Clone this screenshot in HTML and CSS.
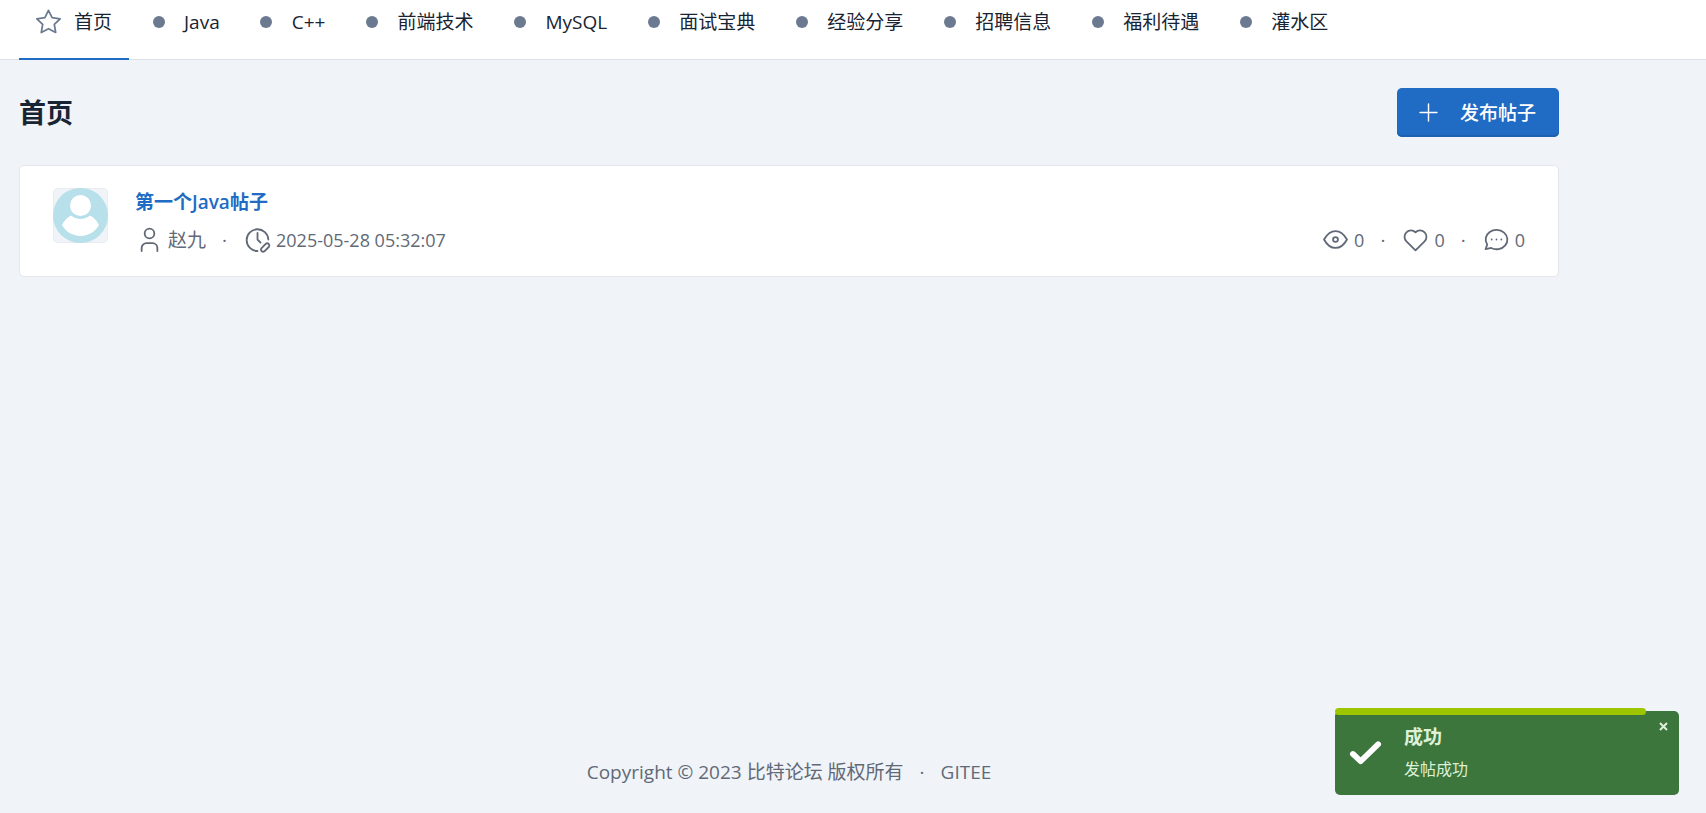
FILE: index.html
```html
<!DOCTYPE html>
<html lang="zh-CN">
<head>
<meta charset="utf-8">
<meta name="viewport" content="width=device-width, initial-scale=1">
<title>比特论坛</title>
<link rel="stylesheet" href="styles.css">
</head>
<body>
<nav class="navbar">
  <a class="nav-link active" href="#">
    <svg class="nav-icon star" viewBox="0 0 24 24"><path d="M12 17.75l-6.172 3.245l1.179-6.873l-5-4.867l6.9-1l3.086-6.253l3.086 6.253l6.9 1l-5 4.867l1.179 6.873z"/></svg>
    <span>首页</span>
  </a>
  <a class="nav-link" href="#"><span class="nav-icon"><i class="dot"></i></span><span>Java</span></a>
  <a class="nav-link" href="#"><span class="nav-icon"><i class="dot"></i></span><span>C++</span></a>
  <a class="nav-link" href="#"><span class="nav-icon"><i class="dot"></i></span><span>前端技术</span></a>
  <a class="nav-link" href="#"><span class="nav-icon"><i class="dot"></i></span><span>MySQL</span></a>
  <a class="nav-link" href="#"><span class="nav-icon"><i class="dot"></i></span><span>面试宝典</span></a>
  <a class="nav-link" href="#"><span class="nav-icon"><i class="dot"></i></span><span>经验分享</span></a>
  <a class="nav-link" href="#"><span class="nav-icon"><i class="dot"></i></span><span>招聘信息</span></a>
  <a class="nav-link" href="#"><span class="nav-icon"><i class="dot"></i></span><span>福利待遇</span></a>
  <a class="nav-link" href="#"><span class="nav-icon"><i class="dot"></i></span><span>灌水区</span></a>
</nav>
<div class="page">
  <main>
    <header class="page-header">
      <h1>首页</h1>
      <button class="btn-primary" type="button">
        <svg class="icon plus" viewBox="0 0 24 24"><path d="M12 5v14M5 12h14"/></svg>
        <span>发布帖子</span>
      </button>
    </header>
    <article class="card">
      <svg class="avatar" viewBox="0 0 55 55" role="img" aria-label="头像">
        <circle class="avatar-bg" cx="27.500" cy="27.500" r="27.500"/>
        <circle class="avatar-fg" cx="27.500" cy="17.500" r="10.500"/>
        <path class="avatar-fg" d="M18 27.500C23.500 32 31.500 32 37 27.500C41 29.500 44 33 46 37C38 51.500 17 51.500 9 37C11 33 14 29.500 18 27.500Z"/>
      </svg>
      <div class="card-body">
        <a class="post-title" href="#">第一个Java帖子</a>
        <div class="meta">
          <div class="meta-list">
            <span class="meta-item">
              <svg class="icon" viewBox="0 0 24 24"><circle cx="12" cy="7" r="4"/><path d="M5.500 21.500v-2.500a4 4 0 0 1 4-4h5a4 4 0 0 1 4 4v2.500"/></svg>
              赵九
            </span>
            <span class="sep">·</span>
            <span class="meta-item">
              <svg class="icon" viewBox="0 0 24 24"><path d="M21 12a9 9 0 1 0-9 9.500M12 6.500V12l2.500 2.500"/><path d="M19 15.500l-3.800 3.800a1.800 1.800 0 0 0 2.500 2.500L21.500 18a1.800 1.800 0 0 0-2.500-2.500z"/></svg>
              <time class="number">2025-05-28 05:32:07</time>
            </span>
          </div>
          <div class="meta-list">
            <span class="meta-item">
              <svg class="icon" viewBox="0 0 24 24"><circle cx="12" cy="12" r="2"/><path d="M2.500 12q3.800-7 9.500-7t9.500 7q-3.800 7-9.500 7t-9.500-7z"/></svg>
              <span class="number">0</span>
            </span>
            <span class="sep">·</span>
            <span class="meta-item">
              <svg class="icon" viewBox="0 0 24 24"><path d="M19.500 13.572L12 21l-7.500-7.428A5 5 0 1 1 12 6.006a5 5 0 1 1 7.500 7.572"/></svg>
              <span class="number">0</span>
            </span>
            <span class="sep">·</span>
            <span class="meta-item">
              <svg class="icon" viewBox="0 0 24 24"><path d="M3 20l1.300-3.900C1.980 12.660 2.870 8.220 6.400 5.726c3.520-2.490 8.590-2.250 11.840.57c3.250 2.820 3.670 7.340.98 10.560c-2.690 3.230-7.650 4.150-11.600 2.150L3 20M12 12v.010M8 12v.010M16 12v.010"/></svg>
              <span class="number">0</span>
            </span>
          </div>
        </div>
      </div>
    </article>
  </main>
  <footer class="footer">
    <span>Copyright © 2023 比特论坛 版权所有</span>
    <span class="sep">·</span>
    <a href="#">GITEE</a>
  </footer>
</div>
<div class="toast" role="status">
  <div class="toast-progress"></div>
  <svg class="toast-icon" viewBox="0 0 34 26"><path d="M4 14l8 7.500L30 4"/></svg>
  <div class="toast-text">
    <strong class="toast-title">成功</strong>
    <span class="toast-message">发帖成功</span>
  </div>
  <button class="toast-close" type="button" aria-label="关闭"><svg viewBox="0 0 9 9"><path d="M1 1l7 7M8 1l-7 7"/></svg></button>
</div>
</body>
</html>
```
FILE: styles.css
```css
* { box-sizing: border-box; }

body {
  margin: 0;
  min-height: 100vh;
  display: flex;
  flex-direction: column;
  background: #f0f4f9;
  color: #182433;
  font: 19px/28px "Open Sans", "Noto Sans CJK SC", sans-serif;
}

a { color: inherit; text-decoration: none; }

.navbar {
  display: flex;
  padding-left: 19px;
  background: #fff;
  border-bottom: 1px solid #dce1e7;
}
.nav-link {
  display: flex;
  align-items: center;
  gap: 11px;
  margin-bottom: -1px;
  padding: 8px 17px 22px 15px;
  border-bottom: 2px solid transparent;
  white-space: nowrap;
}
.nav-link.active { border-bottom-color: #206bc4; }
.nav-icon {
  display: flex;
  width: 29px;
  justify-content: center;
  color: #6c7a91;
}
.star {
  height: 28px;
  overflow: visible;
  fill: none;
  stroke: currentColor;
  stroke-width: 1.500;
  stroke-linejoin: round;
}
.dot { width: 12px; height: 12px; border-radius: 50%; background: #6c7a91; }

.page {
  flex: 1;
  display: flex;
  flex-direction: column;
  justify-content: space-between;
  padding: 28px 147px 27px 19px;
}
.page-header {
  display: flex;
  align-items: center;
  justify-content: space-between;
  margin-bottom: 28px;
}
h1 { margin: 0; font-size: 27px; line-height: 38px; font-weight: 700; }

.icon {
  flex: none;
  width: 29px;
  height: 29px;
  fill: none;
  stroke: currentColor;
  stroke-width: 1.500;
  stroke-linecap: round;
  stroke-linejoin: round;
}
.plus { stroke-width: 1.200; }
.btn-primary {
  display: flex;
  align-items: center;
  gap: 17px;
  padding: 10px 23px 10px 17px;
  border: 0;
  border-radius: 5px;
  background: #206bc4;
  box-shadow: inset 0 -2px 1px #1d60b0;
  color: #fff;
  font: inherit;
  font-weight: 500;
}

.card {
  display: flex;
  gap: 27px;
  padding: 22px 33px;
  background: #fff;
  border: 1px solid #e3e7ec;
  border-radius: 5px;
}
.avatar {
  flex: none;
  width: 55px;
  height: 55px;
  border-radius: 5px;
  background: #f0f4f9;
  box-shadow: 0 0 0 1px #e9edf2 inset;
}
.avatar-bg { fill: #b7e0ea; }
.avatar-fg { fill: #fff; }
.card-body { flex: 1; display: flex; flex-direction: column; gap: 9px; }
.post-title { align-self: flex-start; color: #206bc4; font-weight: 600; }
.meta { display: flex; justify-content: space-between; color: #626976; }
.meta-list { display: flex; align-items: center; }
.meta-item { display: flex; align-items: center; gap: 4px; }
.sep { margin: 0 16px; }
.number { font-size: 18px; }

.footer { display: flex; justify-content: center; color: #626976; }

.toast {
  position: fixed;
  right: 27px;
  bottom: 18px;
  width: 344px;
  display: flex;
  align-items: center;
  padding: 10px 14px;
  border-radius: 5px;
  background: #3c763d;
  color: #dff0d8;
}
.toast-progress {
  position: absolute;
  top: -3px;
  left: 0;
  width: 311px;
  height: 7px;
  border-radius: 4px;
  background: #9ec600;
}
.toast-icon {
  width: 33px;
  height: 26px;
  fill: none;
  stroke: #fff;
  stroke-width: 6;
  stroke-linecap: round;
  stroke-linejoin: round;
}
.toast-text { display: flex; flex-direction: column; gap: 4px; margin-left: 22px; padding: 2px 0; }
.toast-title { line-height: 28px; }
.toast-message { font-size: 16px; line-height: 28px; }
.toast-close {
  position: absolute;
  top: 6px;
  right: 7px;
  display: grid;
  place-items: center;
  width: 18px;
  height: 18px;
  padding: 0;
  border: 0;
  background: none;
}
.toast-close svg { width: 9px; height: 9px; stroke: #dff0d8; stroke-width: 2; }
```
